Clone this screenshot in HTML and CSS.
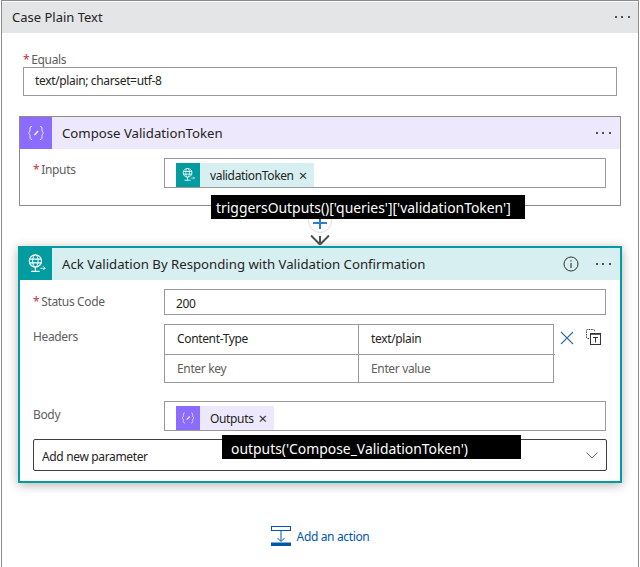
FILE: index.html
```html
<!DOCTYPE html>
<html lang="en">

<head>
  <meta charset="UTF-8">
  <meta name="viewport" content="width=device-width, initial-scale=1.0">
  <title>Case Plain Text</title>
  <link rel="stylesheet" href="styles.css">
</head>

<body>
  <svg class="defs" width="0" height="0">
    <symbol id="globe" viewBox="0 0 16 18">
      <circle cx="7.5" cy="6.5" r="5" fill="none" stroke="#fff" stroke-width="1"/>
      <ellipse cx="7.5" cy="6.5" rx="2.2" ry="5" fill="none" stroke="#fff" stroke-width=".8"/>
      <path d="M2.5 5h10M2.5 8h10M7.5 11.500v3M4 15h7" fill="none" stroke="#fff" stroke-width="1"/>
      <path d="M11.500 12.500h4M14 11l1.500 1.500L14 14" fill="none" stroke="#fff" stroke-width=".7"/>
    </symbol>
    <symbol id="braces" viewBox="0 0 18 18">
      <path d="M5 2.500c-2 0-2 1-2 2.500s0 3-1.500 4C3 10 3 11 3 12.500s0 3 2 3M13 2.500c2 0 2 1 2 2.500s0 3 1.500 4c-1.500 1-1.500 2-1.500 3.500s0 3-2 3" fill="none" stroke="#fff" stroke-width="1" opacity=".85"/>
      <path d="M7 11.500l.5-1.700 3-3.300 1.200 1.100-3 3.300z" fill="#fff" opacity=".85"/>
    </symbol>
    <symbol id="dots" viewBox="0 0 15 2">
      <rect x="0" y="0" width="2" height="2" fill="#505050"/>
      <rect x="6" y="0" width="2" height="2" fill="#505050"/>
      <rect x="13" y="0" width="2" height="2" fill="#505050"/>
    </symbol>
  </svg>

  <div class="case-card">
    <div class="case-header">
      <span class="case-title">Case Plain Text</span>
      <svg class="more" width="15" height="2"><use href="#dots"/></svg>
    </div>

    <div class="case-body">
      <div class="equals">
        <label class="field-label"><span class="req">*</span>Equals</label>
        <div class="field equals-field">text/plain; charset=utf-8</div>
      </div>

      <!-- Compose action -->
      <div class="action compose">
        <div class="action-header compose-header">
          <div class="action-icon compose-icon"><svg width="18" height="18"><use href="#braces"/></svg></div>
          <span class="action-title">Compose ValidationToken</span>
          <svg class="more" width="15" height="2"><use href="#dots"/></svg>
        </div>
        <div class="action-body compose-body">
          <div class="row">
            <label class="row-label"><span class="req">*</span>Inputs</label>
            <div class="field token-field">
              <span class="token token-teal">
                <span class="token-icon teal"><svg width="14" height="16"><use href="#globe"/></svg></span>
                <span class="token-text">validationToken</span>
                <span class="token-x">×</span>
              </span>
            </div>
          </div>
        </div>
      </div>

      <div class="connector">
        <div class="tip tip-top">triggersOutputs()['queries']['validationToken']</div>
        <div class="plus"><span class="plus-h"></span><span class="plus-v"></span></div>
        <svg class="arrow" width="22" height="12" viewBox="0 0 22 12">
          <path d="M2 1.500L11 10.500M20 1.500L11 10.500M11 2v8" fill="none" stroke="#505050" stroke-width="2"/>
        </svg>
      </div>

      <!-- Response action -->
      <div class="action response">
        <div class="action-header response-header">
          <div class="action-icon response-icon"><svg width="20" height="22"><use href="#globe"/></svg></div>
          <span class="action-title">Ack Validation By Responding with Validation Confirmation</span>
          <svg class="info" width="16" height="16" viewBox="0 0 16 16">
            <circle cx="8" cy="8" r="7" fill="none" stroke="#333" stroke-width="1"/>
            <path d="M8 7v5M8 4.200v1.300" fill="none" stroke="#333" stroke-width="1.100"/>
          </svg>
          <svg class="more" width="15" height="2"><use href="#dots"/></svg>
        </div>
        <div class="action-body response-body">
          <div class="row status-row">
            <label class="row-label"><span class="req">*</span>Status Code</label>
            <div class="field status-field">200</div>
          </div>
          <div class="row headers-row">
            <label class="row-label">Headers</label>
            <div class="kv-table">
              <div class="kv-cell kv-key">Content-Type</div>
              <div class="kv-cell kv-val">text/plain</div>
              <div class="kv-cell kv-key kv-low placeholder">Enter key</div>
              <div class="kv-cell kv-val kv-low placeholder">Enter value</div>
            </div>
            <svg class="kv-x" width="14" height="14" viewBox="0 0 14 14">
              <path d="M1 1l12 12M13 1L1 13" fill="none" stroke="#2f6fb0" stroke-width="1.100"/>
            </svg>
            <svg class="kv-copy" width="15" height="16" viewBox="0 0 15 16">
              <path d="M3 9.500H1.500a1 1 0 0 1-1-1V1.500a1 1 0 0 1 1-1h6a1 1 0 0 1 1 1V3" fill="none" stroke="#333" stroke-width="1" stroke-dasharray="1.500 1"/>
              <rect x="4.500" y="4.500" width="10" height="11" fill="#fff" stroke="#333" stroke-width="1"/>
              <path d="M4.500 5h10" stroke="#333" stroke-width="1.500"/>
              <path d="M7 8.500h5M9.500 8.500v5" fill="none" stroke="#333" stroke-width="1"/>
            </svg>
          </div>
          <div class="row body-row">
            <label class="row-label">Body</label>
            <div class="field token-field">
              <span class="token token-purple">
                <span class="token-icon purple"><svg width="14" height="14"><use href="#braces"/></svg></span>
                <span class="token-text">Outputs</span>
                <span class="token-x">×</span>
              </span>
            </div>
          </div>
          <div class="param-select">
            <span class="param-text">Add new parameter</span>
            <svg width="12" height="7" viewBox="0 0 12 7">
              <path d="M.5 .5L6 6 11.500 .5" fill="none" stroke="#666" stroke-width="1"/>
            </svg>
          </div>
          <div class="tip tip-bottom">outputs('Compose_ValidationToken')</div>
        </div>
      </div>

      <div class="add-action">
        <svg width="20" height="20" viewBox="0 0 20 20">
          <rect x=".5" y=".5" width="19" height="4" fill="#fff" stroke="#0058ad"/>
          <path d="M10 5v10M6.500 12L10 15.500 13.500 12" fill="none" stroke="#0058ad" stroke-width="1"/>
          <rect x="0" y="16.500" width="20" height="3.500" fill="#0058ad"/>
        </svg>
        <span>Add an action</span>
      </div>
    </div>
  </div>
</body>

</html>
```

FILE: styles.css
```css
body {
  font-family: "Noto Sans", "Open Sans", sans-serif;
  font-size: 12px;
  letter-spacing: -0.35px;
  color: #252423;
  background-color: #ffffff;
  margin: 0;
  height: 567px;
  overflow: hidden;
}

.defs {
  display: block;
  height: 0;
}

.req {
  color: #c4314b;
  margin-right: 2px;
}

.more {
  flex: none;
}

.case-card {
  width: 638px;
  height: 567px;
  margin-left: 1px;
  box-sizing: border-box;
  border: 1px solid #8f8b89;
  border-bottom: 0;
}

.case-header {
  display: flex;
  justify-content: space-between;
  align-items: center;
  box-sizing: border-box;
  height: 31px;
  margin-top: 1px;
  padding: 0 8px 2px 10px;
  background: #e3e5e6;
}

.case-title {
  font-size: 13px;
  letter-spacing: 0;
}

.case-body {
  padding: 0 17px;
}

.equals {
  padding: 19px 4px 0 4px;
}

.field-label,
.row-label {
  display: block;
  color: #605e5c;
  line-height: 15px;
}

.field {
  box-sizing: border-box;
  border: 1px solid #9b9998;
  background: #ffffff;
}

.equals-field {
  height: 29px;
  padding-left: 11px;
  line-height: 26px;
}

.action {
  box-sizing: border-box;
  background: #ffffff;
}

.compose {
  height: 90px;
  margin-top: 20px;
  border: 1px solid #8f8b89;
}

.response {
  position: relative;
  width: 604px;
  height: 237px;
  margin-left: -1px;
  border: 2px solid #009c9f;
  box-shadow: 0 2px 10px rgba(0, 0, 0, 0.3);
}

.action-header {
  display: flex;
  align-items: center;
  height: 32px;
  padding-right: 9px;
}

.compose-header {
  background: #ede8fc;
}

.response-header {
  background: #d7eff1;
}

.action-icon {
  display: flex;
  justify-content: center;
  align-items: center;
  width: 32px;
  height: 32px;
  margin-right: 10px;
}

.compose-icon {
  background: #8c6cff;
}

.response-icon {
  background: #009c9f;
}

.action-title {
  flex: 1;
  font-size: 13.200px;
  letter-spacing: 0;
}

.info {
  margin-right: 17px;
}

.action-body {
  padding: 8px 13px 0 13px;
}

.compose-body {
  padding-top: 9px;
}

.row {
  display: flex;
  align-items: flex-start;
}

.row-label {
  flex: none;
  width: 131px;
  padding-top: 5px;
}

.compose-body .row-label {
  padding-top: 4px;
}

.token-field {
  display: flex;
  align-items: flex-end;
  width: 442px;
  height: 30px;
  padding: 0 0 0 11px;
}

.token {
  display: flex;
  align-items: center;
  height: 24px;
}

.token-teal {
  background: #d7eff1;
}

.token-purple {
  background: #ede8fc;
}

.token-icon {
  display: flex;
  justify-content: center;
  align-items: center;
  width: 24px;
  height: 24px;
}

.teal {
  background: #009c9f;
}

.purple {
  background: #8c6cff;
}

.token-text {
  margin-left: 10px;
  padding-top: 1px;
}

.token-x {
  margin: 0 7px 0 5px;
  font-size: 15px;
  line-height: 15px;
  color: #333333;
}

.connector {
  position: relative;
  height: 40px;
}

.tip {
  position: absolute;
  z-index: 2;
  box-sizing: border-box;
  height: 24px;
  padding-left: 5px;
  background: #000000;
  color: #ffffff;
  font-size: 13.900px;
  letter-spacing: 0;
  white-space: nowrap;
}

.tip-top {
  top: -11px;
  left: 192px;
  width: 314px;
  line-height: 25px;
}

.tip-bottom {
  top: 187px;
  left: 202px;
  width: 299px;
  padding-left: 9px;
  line-height: 27px;
}

.plus {
  position: absolute;
  top: 3px;
  left: 289px;
  box-sizing: border-box;
  width: 24px;
  height: 24px;
  border: 1px solid #dddddd;
  border-radius: 50%;
  background: #ffffff;
}

.plus-h {
  position: absolute;
  top: 12px;
  left: 4px;
  width: 14px;
  height: 2px;
  background: #2f7fc8;
}

.plus-v {
  position: absolute;
  top: 8px;
  left: 10px;
  width: 2px;
  height: 11px;
  background: #2f7fc8;
}

.arrow {
  position: absolute;
  top: 28px;
  left: 290px;
}

.status-row {
  height: 26px;
  margin-top: 1px;
}

.status-field {
  width: 442px;
  height: 26px;
  padding-left: 11px;
  line-height: 27px;
}

.headers-row {
  position: relative;
  height: 77px;
  margin-top: 9px;
}

.kv-table {
  display: grid;
  grid-template-columns: 194px 196px;
  grid-template-rows: 29px 29px;
  box-sizing: border-box;
  width: 390px;
  height: 59px;
  border: 1px solid #9b9998;
}

.kv-cell {
  padding-left: 12px;
  line-height: 28px;
}

.kv-key {
  border-right: 1px solid #9b9998;
}

.kv-low {
  border-top: 1px solid #9b9998;
}

.placeholder {
  color: #605e5c;
}

.kv-x {
  position: absolute;
  top: 7px;
  left: 527px;
}

.kv-copy {
  position: absolute;
  top: 5px;
  left: 553px;
}

.body-row .row-label {
  padding-top: 6px;
}

.param-select {
  display: flex;
  justify-content: space-between;
  align-items: center;
  box-sizing: border-box;
  width: 574px;
  height: 32px;
  margin-top: 8px;
  padding: 0 8px 0 8px;
  border: 1px solid #3f3f3f;
  border-radius: 2px;
}

.param-text {
  padding-top: 2px;
}

.add-action {
  display: flex;
  align-items: center;
  justify-content: center;
  gap: 6px;
  margin-top: 43px;
  color: #0058ad;
}
```
